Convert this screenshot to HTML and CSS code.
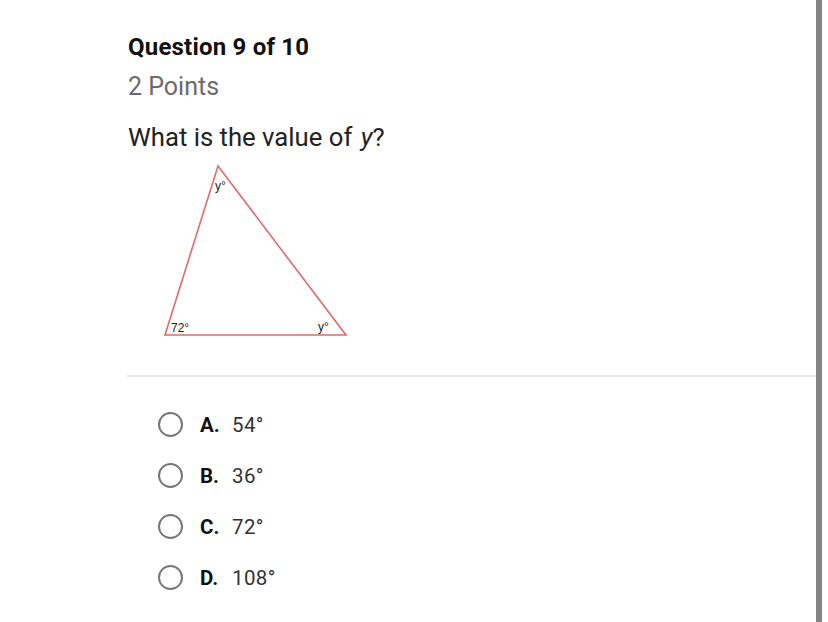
FILE: index.html
```html
<!DOCTYPE html>
<html>
<head>
<meta charset="utf-8">
<link rel="stylesheet" href="styles.css">
</head>
<body>
<div class="page">
  <main class="main">
    <div class="q-head">
      <h1 class="q-title">Question 9 of 10</h1>
      <div class="q-points">2 Points</div>
      <div class="q-text">What is the value of <i>y</i>?</div>
      <svg class="figure" width="200" height="180" viewBox="160 160 200 180">
        <polygon points="218,166 165,335 346,335" fill="none" stroke="#e26a6a" stroke-width="1.6"/>
        <text x="215" y="190" class="lbl">y°</text>
        <text x="171" y="332" class="lbl">72°</text>
        <text x="318" y="331" class="lbl">y°</text>
      </svg>
    </div>
    <div class="divider"></div>
    <ul class="options">
      <li class="opt"><span class="radio"></span><b class="letter">A.</b><span class="val">54°</span></li>
      <li class="opt"><span class="radio"></span><b class="letter">B.</b><span class="val">36°</span></li>
      <li class="opt"><span class="radio"></span><b class="letter">C.</b><span class="val">72°</span></li>
      <li class="opt"><span class="radio"></span><b class="letter">D.</b><span class="val">108°</span></li>
    </ul>
  </main>
  <div class="bar"></div>
  <div class="rest"></div>
</div>
</body>
</html>
```
FILE: styles.css
```css
html, body {
  margin: 0;
  padding: 0;
  background: #fff;
}
body {
  font-family: Roboto, "Liberation Sans", Arial, sans-serif;
  color: #202020;
  overflow: hidden;
}
.page {
  display: flex;
  width: 828px;
  height: 622px;
}
.main {
  width: 816px;
  flex: none;
}
.bar {
  width: 6px;
  flex: none;
  background: #858585;
}
.rest {
  flex: 1;
}
.q-head {
  padding: 32px 0 0 128px;
}
.q-title {
  margin: 0;
  font-size: 24px;
  font-weight: 700;
  letter-spacing: 0.2px;
  line-height: 30px;
  color: #111;
}
.q-points {
  margin-top: 10px;
  font-size: 25px;
  line-height: 30px;
  color: #6b6b6b;
}
.q-text {
  margin-top: 20px;
  font-size: 25.7px;
  line-height: 30px;
  color: #222;
}
.q-text i {
  font-style: italic;
  padding-left: 2px;
}
.figure {
  display: block;
  margin: 8px 0 0 32px;
}
.lbl {
  font-family: "Liberation Sans", Arial, sans-serif;
  font-size: 12px;
  fill: #222;
}
.divider {
  margin: 35px 0 0 127px;
  height: 2px;
  background: #e8e8e8;
}
.options {
  list-style: none;
  margin: 0;
  padding: 22px 0 0 158px;
}
.opt {
  display: flex;
  align-items: center;
  height: 51px;
  font-size: 20.5px;
  color: #222;
}
.radio {
  width: 21px;
  height: 21px;
  border: 2px solid #777;
  border-radius: 50%;
  flex: none;
  margin-right: 17px;
}
.letter {
  font-weight: 700;
  width: 32px;
  color: #111;
}
.val {
  color: #333;
  letter-spacing: 0.4px;
}
```
